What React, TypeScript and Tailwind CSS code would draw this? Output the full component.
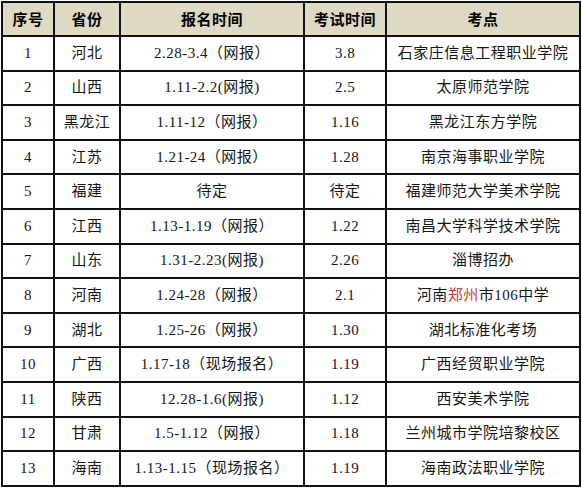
import React from "react";

type Row = [string, string, React.ReactNode, string, React.ReactNode];

const rows: Row[] = [
  ["1", "河北", "2.28-3.4（网报）", "3.8", "石家庄信息工程职业学院"],
  ["2", "山西", "1.11-2.2(网报)", "2.5", "太原师范学院"],
  ["3", "黑龙江", "1.11-12（网报）", "1.16", "黑龙江东方学院"],
  ["4", "江苏", "1.21-24（网报）", "1.28", "南京海事职业学院"],
  ["5", "福建", "待定", "待定", "福建师范大学美术学院"],
  ["6", "江西", "1.13-1.19（网报）", "1.22", "南昌大学科学技术学院"],
  ["7", "山东", "1.31-2.23(网报)", "2.26", "淄博招办"],
  [
    "8",
    "河南",
    "1.24-28（网报）",
    "2.1",
    <>
      河南<span className="text-[#c83c3c]">郑州</span>市106中学
    </>,
  ],
  ["9", "湖北", "1.25-26（网报）", "1.30", "湖北标准化考场"],
  ["10", "广西", "1.17-18（现场报名）", "1.19", "广西经贸职业学院"],
  ["11", "陕西", "12.28-1.6(网报)", "1.12", "西安美术学院"],
  ["12", "甘肃", "1.5-1.12（网报）", "1.18", "兰州城市学院培黎校区"],
  ["13", "海南", "1.13-1.15（现场报名）", "1.19", "海南政法职业学院"],
];

const headers = ["序号", "省份", "报名时间", "考试时间", "考点"];

export default function App() {
  return (
    <div className="w-[582px] h-[490px] bg-white pt-[1px] pl-[1px]">
      <table
        className="w-[578px] table-fixed border-collapse border-2 border-[#111] text-[15px] text-[#151515]"
        style={{ fontFamily: '"Liberation Serif", "Noto Sans CJK SC", serif' }}
      >
        <colgroup>
          <col className="w-[52px]" />
          <col className="w-[66px]" />
          <col className="w-[184px]" />
          <col className="w-[82px]" />
          <col className="w-[194px]" />
        </colgroup>
        <thead>
          <tr className="h-[34px] bg-[#ddd9c3]">
            {headers.map((h) => (
              <th
                key={h}
                className="border-2 border-[#111] p-0 text-center font-bold text-[15px] text-black tracking-[0.5px]"
                style={{ fontFamily: '"Noto Sans CJK SC", sans-serif' }}
              >
                {h}
              </th>
            ))}
          </tr>
        </thead>
        <tbody>
          {rows.map((r, i) => (
            <tr key={i} className="h-[34.6px]">
              {r.map((c, j) => (
                <td
                  key={j}
                  className="border-2 border-[#111] p-0 text-center leading-none whitespace-nowrap tracking-[0.5px]"
                >
                  {c}
                </td>
              ))}
            </tr>
          ))}
        </tbody>
      </table>
    </div>
  );
}
